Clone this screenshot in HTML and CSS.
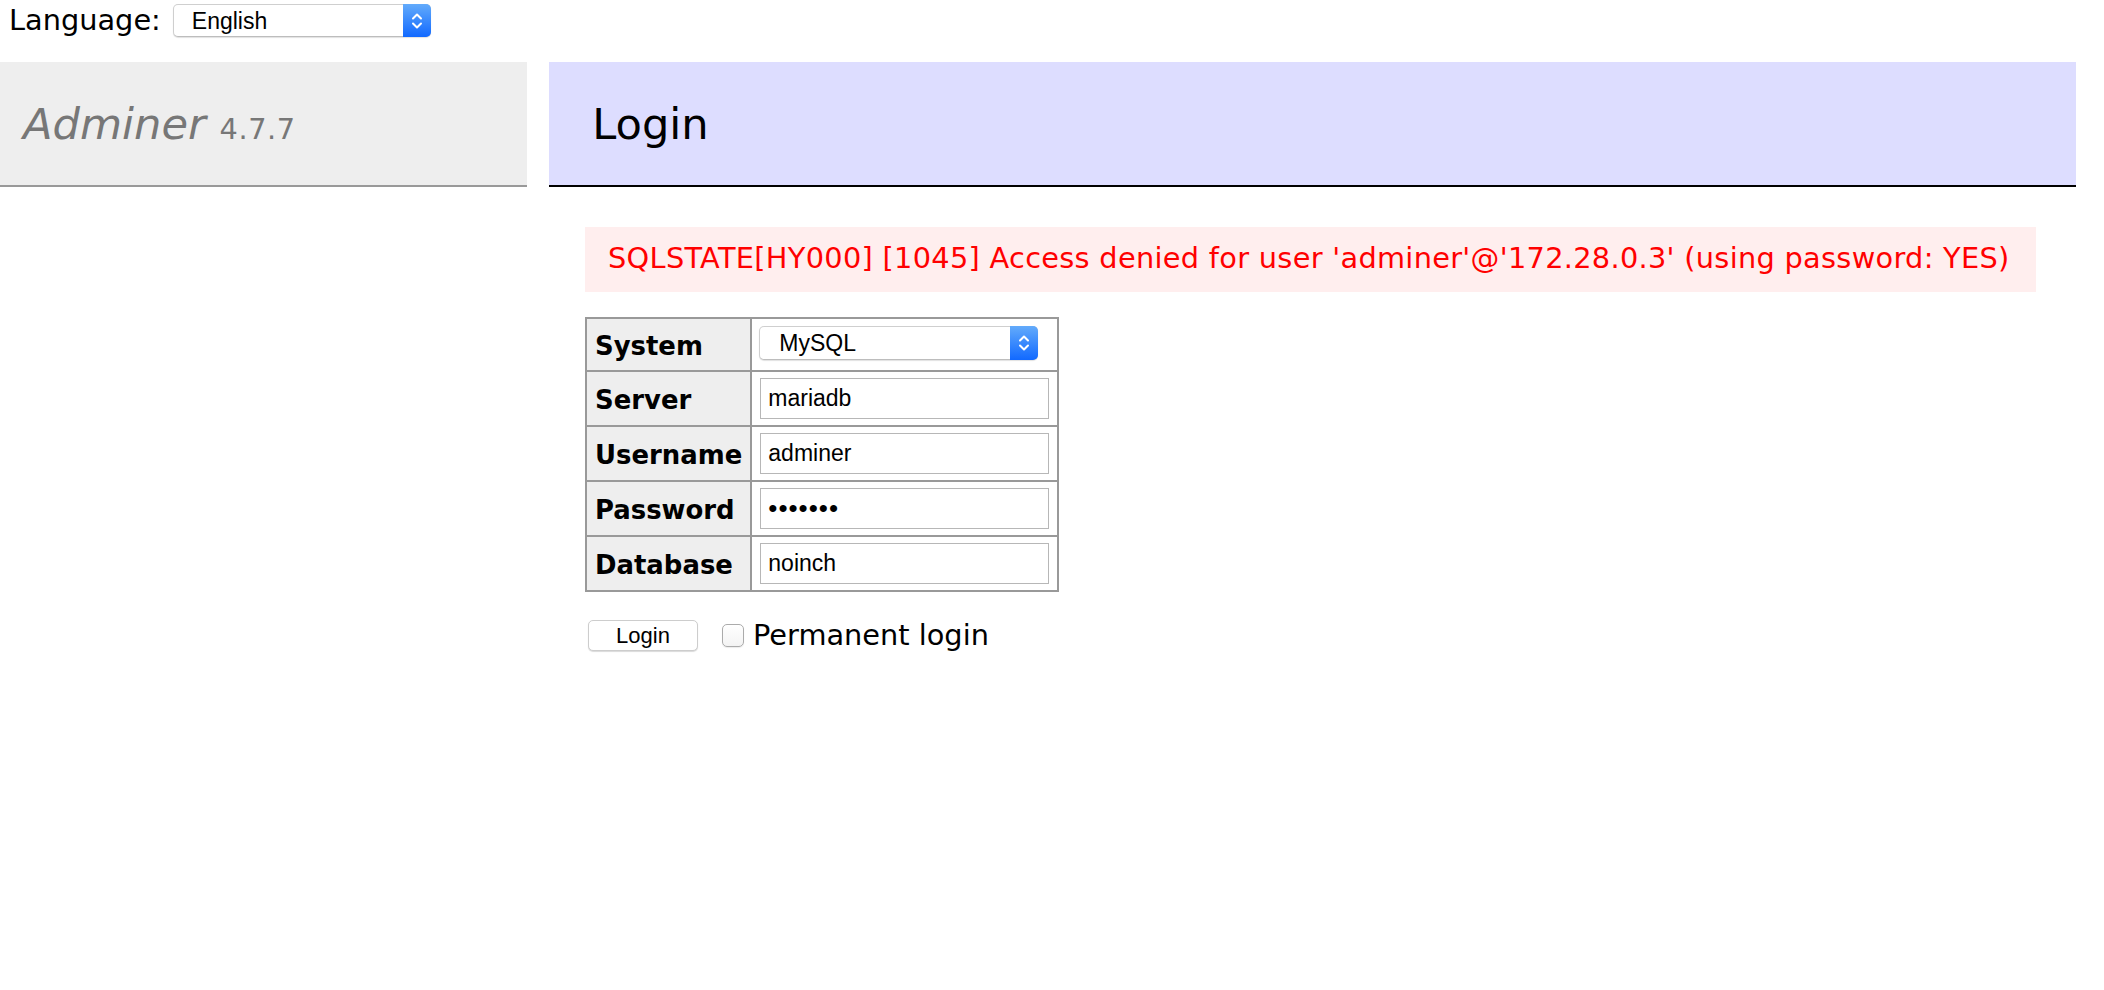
FILE: index.html
```html
<!DOCTYPE html>
<html lang="en">
<head>
	<meta charset="UTF-8">
	<meta name="viewport" content="width=device-width, initial-scale=1.0">
	<title>Login - Adminer</title>
	<link rel="stylesheet" href="styles.css">
</head>
<body>
	<form class="lang" action="" method="post">
		<span>Language:</span>
		<span class="select select-lang">
			<select name="lang">
				<option selected>English</option>
			</select>
			<span class="select-arrows">
				<svg width="12" height="20" viewBox="0 0 12 20"><path d="M2 7.5 6 3.5 10 7.5M2 12.5 6 16.5 10 12.5"/></svg>
			</span>
		</span>
	</form>

	<div class="page">
		<div class="menu">
			<h1><span class="brand">Adminer</span> <span class="version">4.7.7</span></h1>
		</div>

		<div class="content">
			<h2>Login</h2>
			<div class="error">SQLSTATE[HY000] [1045] Access denied for user 'adminer'@'172.28.0.3' (using password: YES)</div>

			<form class="login" action="" method="post">
				<table class="login-table">
					<tr>
						<th>System</th>
						<td>
							<span class="select select-driver">
								<select name="auth[driver]">
									<option selected>MySQL</option>
								</select>
								<span class="select-arrows">
									<svg width="12" height="20" viewBox="0 0 12 20"><path d="M2 7.5 6 3.5 10 7.5M2 12.5 6 16.5 10 12.5"/></svg>
								</span>
							</span>
						</td>
					</tr>
					<tr>
						<th>Server</th>
						<td><input class="field" name="auth[server]" value="mariadb"></td>
					</tr>
					<tr>
						<th>Username</th>
						<td><input class="field" name="auth[username]" value="adminer"></td>
					</tr>
					<tr>
						<th>Password</th>
						<td><input class="field field-password" type="password" name="auth[password]" value="secret1"></td>
					</tr>
					<tr>
						<th>Database</th>
						<td><input class="field" name="auth[db]" value="noinch"></td>
					</tr>
				</table>
				<p class="actions">
					<button type="submit" class="btn">Login</button>
					<label class="permanent"><input type="checkbox" class="check" name="auth[permanent]">Permanent login</label>
				</p>
			</form>
		</div>
	</div>
</body>
</html>
```

FILE: styles.css
```css
body {
	margin: 0;
	color: #000;
	background: #fff;
	font: 28.8px/1.25 "DejaVu Sans", Verdana, sans-serif;
}

/* language switcher */
.lang {
	display: flex;
	align-items: center;
	gap: 12px;
	height: 62px;
	box-sizing: border-box;
	padding: 4px 0 25px 9px;
	margin: 0;
}

/* native-looking select boxes */
.select {
	position: relative;
	display: inline-block;
}
.select select {
	appearance: none;
	-webkit-appearance: none;
	display: block;
	margin: 0;
	background: #fff;
	border: 1px solid #cfcfcf;
	border-bottom-color: #bdbdbd;
	border-radius: 5px;
	box-shadow: 0 1px 1px rgba(0, 0, 0, 0.12);
	font: 23px "Liberation Sans", Arial, sans-serif;
	color: #000;
}
.select-lang select {
	width: 258px;
	height: 33px;
	padding: 0 0 0 18px;
}
.select-driver {
	display: block;
	width: 279px;
	margin: 1px 0 4px -1px;
}
.select-driver select {
	width: 279px;
	height: 34px;
	padding: 0 0 0 19px;
}
.select-arrows {
	position: absolute;
	top: 0;
	right: 0;
	width: 28px;
	height: 100%;
	display: flex;
	align-items: center;
	justify-content: center;
	border-radius: 0 5px 5px 0;
	background: linear-gradient(#63abfb, #1169ff);

	& path {
		fill: none;
		stroke: #fff;
		stroke-width: 2;
		stroke-linecap: round;
		stroke-linejoin: round;
	}
}

.page {
	display: flex;
	align-items: flex-start;
}

/* left menu */
.menu {
	flex: none;
	width: 527px;
	margin-right: 22px;
}
h1 {
	margin: 0;
	padding: 34.5px 21px 34.5px 23px;
	font-size: 43.2px;
	font-weight: normal;
	line-height: 1.25;
	color: #777;
	background: #eee;
	border-bottom: 2px solid #999;
}
.brand {
	font-style: italic;
}
.version {
	font-size: 28.8px;
	letter-spacing: 0.6px;
}

/* main column */
.content {
	flex: none;
	width: 1527px;
}
h2 {
	margin: 0;
	padding: 34.5px 43.2px;
	font-size: 43.2px;
	font-weight: normal;
	line-height: 1.25;
	background: #ddf;
	border-bottom: 2px solid #000;
}
.error {
	margin: 40px 40px 0 36px;
	padding: 14.4px 23px;
	color: red;
	background: #fee;
	letter-spacing: 0.3px;
	white-space: nowrap;
}

.login {
	margin-left: 36px;
}
.login-table {
	margin: 25px 0 0;
	border-collapse: collapse;
	font-size: 25.92px;
}
.login-table th,
.login-table td {
	border: 2px solid #999;
	padding: 6px 8px;
	vertical-align: middle;
}
.login-table th {
	width: 146px;
	padding-top: 8px;
	padding-bottom: 4px;
	background: #eee;
	text-align: left;
	line-height: 32px;
}
.login-table td {
	width: 289px;
}

.field {
	display: block;
	box-sizing: border-box;
	width: 289px;
	height: 41px;
	margin: 0;
	padding: 0 7px;
	border: 1px solid #b7b7b7;
	font: 23px "Liberation Sans", Arial, sans-serif;
	color: #000;
	background: #fff;
}
.field-password {
	font-size: 26px;
	letter-spacing: 1px;
}

.actions {
	display: flex;
	align-items: center;
	margin: 26px 0 0;
}
.btn {
	width: 110px;
	height: 31px;
	margin: 0 0 0 3px;
	padding: 0;
	background: #fff;
	border: 1px solid #cdcdcd;
	border-radius: 5px;
	box-shadow: 0 1px 1px rgba(0, 0, 0, 0.15);
	font: 22px "Liberation Sans", Arial, sans-serif;
	color: #000;
}
.permanent {
	display: flex;
	align-items: center;
	margin-left: 24px;
}
.check {
	appearance: none;
	-webkit-appearance: none;
	width: 22px;
	height: 23px;
	margin: 0 9px 0 0;
	border: 1px solid #ababab;
	border-radius: 5px;
	background: linear-gradient(#fff, #f3f3f3);
	box-shadow: 0 1px 1px rgba(0, 0, 0, 0.08);
}
```
